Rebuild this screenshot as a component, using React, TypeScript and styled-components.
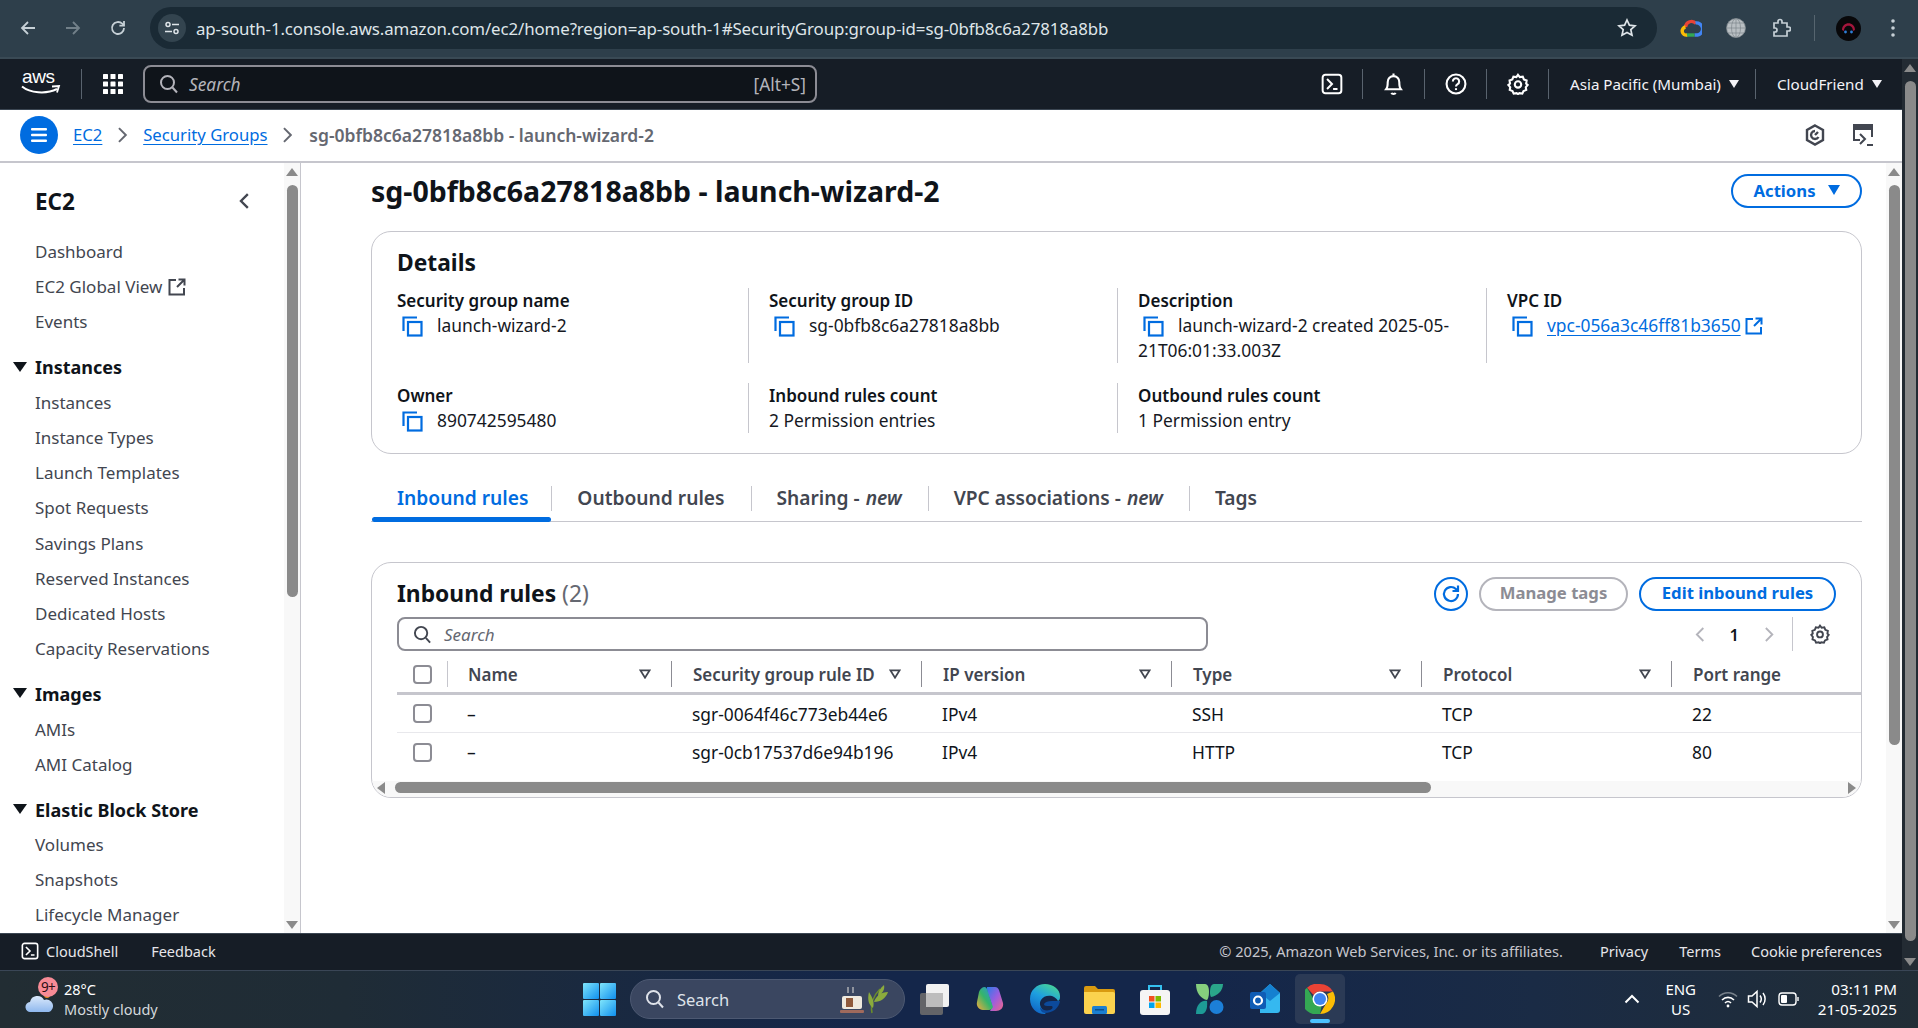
import React from 'react'
import styled, { createGlobalStyle } from 'styled-components'

const FONT = '"Noto Sans", "Open Sans", sans-serif'
const BLUE = '#006ce0'

const GlobalStyle = createGlobalStyle`
  html, body {
    margin: 0;
    padding: 0;
    height: 100%;
    overflow: hidden;
    background: #fff;
    font-family: ${FONT};
  }
  * { box-sizing: border-box; }
`

const Page = styled.div`
  width: 1918px;
  height: 1028px;
  display: flex;
  flex-direction: column;
  overflow: hidden;
`

/* browser chrome */
const BrowserBar = styled.div`
  height: 59px;
  flex: none;
  display: flex;
  align-items: center;
  background: #2e3f4b;
  border-bottom: 2px solid #3a4a55;
  padding: 0 0 1px 0;
  color: #c6d0d6;
`
const NavIcon = styled.div<{ $dim?: boolean; $w?: number; $ml?: number }>`
  width: ${p => p.$w ?? 45}px;
  margin-left: ${p => p.$ml ?? 0}px;
  display: flex;
  justify-content: center;
  opacity: ${p => (p.$dim ? 0.45 : 1)};
`
const UrlPill = styled.div`
  width: 1507px;
  height: 42px;
  margin-left: 10px;
  border-radius: 21px;
  background: #1a2a35;
  display: flex;
  align-items: center;
  padding: 0 20px 0 8px;
  color: #dfe5e9;
  font-size: 16.85px;
`
const SiteChip = styled.div`
  width: 28px;
  height: 28px;
  border-radius: 50%;
  background: #33444f;
  display: flex;
  align-items: center;
  justify-content: center;
  margin-right: 10px;
`
const UrlText = styled.span`
  flex: 1;
  letter-spacing: -0.1px;
`
const BrowserActions = styled.div`
  flex: 1;
  display: flex;
  align-items: center;
  padding-left: 11px;
`
const ThinDivider = styled.div`
  width: 1px;
  height: 26px;
  background: #56656f;
  margin: 0 8px 0 11px;
`

/* console */
const ConsoleWrap = styled.div`
  flex: 1;
  min-height: 0;
  display: flex;
`
const ConsoleColumn = styled.div`
  flex: 1;
  min-width: 0;
  display: flex;
  flex-direction: column;
`
const TopNav = styled.div`
  height: 51px;
  flex: none;
  background: #161d26;
  display: flex;
  align-items: center;
  color: #fff;
  border-bottom: 1px solid #3b4652;
`
const AwsLogo = styled.div`
  width: 81px;
  height: 100%;
  padding-left: 21px;
  display: flex;
  flex-direction: column;
  justify-content: center;
`
const AwsWord = styled.span`
  font-size: 19px;
  line-height: 15px;
  font-weight: 500;
  letter-spacing: -0.4px;
  font-family: "Liberation Sans", sans-serif;
  margin-left: 1px;
  margin-top: -4px;
`
const NavSep = styled.div`
  width: 1px;
  height: 30px;
  background: #59636e;
  flex: none;
`
const GridButton = styled.div`
  width: 61px;
  display: flex;
  justify-content: center;
`
const NavSearch = styled.div`
  width: 674px;
  height: 38px;
  background: #0f141a;
  border: 2px solid #8c8c94;
  border-radius: 8px;
  display: flex;
  align-items: center;
  padding: 0 9px 0 14px;
  color: #b4b4bb;
  font-size: 17.3px;
  gap: 10px;
`
const Placeholder = styled.span`
  font-style: italic;
  flex: 1;
`
const PlainPlaceholder = styled.span`
  flex: 1;
`
const NavRight = styled.div`
  margin-left: auto;
  display: flex;
  align-items: center;
  height: 100%;
`
const NavIconButton = styled.div`
  width: 61px;
  display: flex;
  justify-content: center;
  color: #fff;
`
const NavMenu = styled.div<{ $w: number }>`
  width: ${p => p.$w}px;
  padding-left: 21px;
  display: flex;
  align-items: center;
  font-size: 15.2px;
  color: #f3f3f7;
  white-space: nowrap;
`
const SmallCaret = styled.span`
  width: 0;
  height: 0;
  border-left: 5.5px solid transparent;
  border-right: 5.5px solid transparent;
  border-top: 8px solid #f3f3f7;
  margin-left: 8px;
`

const Breadcrumbs = styled.div`
  height: 53px;
  flex: none;
  background: #fff;
  border-bottom: 2px solid #c6c6cd;
  display: flex;
  align-items: center;
  padding: 0 28px 2px 20px;
  font-size: 16.7px;
`
const MenuCircle = styled.div`
  width: 38px;
  height: 38px;
  border-radius: 50%;
  background: ${BLUE};
  display: flex;
  align-items: center;
  justify-content: center;
  margin-right: 15px;
`
const Crumb = styled.a`
  color: ${BLUE};
  text-decoration: underline;
  text-underline-offset: 3px;
`
const CrumbCurrent = styled.span`
  color: #656871;
  font-weight: 600;
  font-size: 17.5px;
`
const CrumbChevron = styled.span<{ $mx: number }>`
  display: flex;
  margin: 0 ${p => p.$mx}px;
`
const CurrentChevron = styled(CrumbChevron)`
  margin-right: 17px;
`
const BreadcrumbTools = styled.div`
  margin-left: auto;
  display: flex;
  gap: 27px;
  align-items: center;
`

const ConsoleBody = styled.div`
  flex: 1;
  min-height: 0;
  display: flex;
`

const Sidebar = styled.aside`
  width: 301px;
  flex: none;
  display: flex;
  border-right: 1px solid #c6c6cd;
`
const SideInner = styled.nav`
  flex: 1;
  min-width: 0;
  overflow: hidden;
  padding: 20px 0 0 35px;
  color: #424650;
`
const SideTitleRow = styled.div`
  display: flex;
  align-items: center;
  justify-content: space-between;
  padding-right: 34px;
  height: 36px;
  margin-bottom: 15px;
`
const SideTitle = styled.div`
  font-size: 22.5px;
  font-weight: 700;
  color: #0f141a;
`
const SideItem = styled.div`
  height: 35.2px;
  display: flex;
  align-items: center;
  gap: 6px;
  font-size: 17px;
  white-space: nowrap;
`
const SideSection = styled.div`
  position: relative;
  height: 35px;
  margin-top: 10.2px;
  display: flex;
  align-items: center;
  font-size: 18px;
  font-weight: 700;
  color: #0f141a;
  white-space: nowrap;
`
const SectionCaret = styled.span`
  position: absolute;
  left: -22px;
  top: 12px;
  width: 0;
  height: 0;
  border-left: 7px solid transparent;
  border-right: 7px solid transparent;
  border-top: 10px solid #0f141a;
`

const Scrollbar = styled.div<{ $dark?: boolean; $w: number }>`
  width: ${p => p.$w}px;
  flex: none;
  display: flex;
  flex-direction: column;
  align-items: center;
  background: ${p => (p.$dark ? '#232b33' : '#f8f8f8')};
  padding: 5px 0 4px;
`
const ArrowUp = styled.span`
  width: 0;
  height: 0;
  flex: none;
  border-left: 6px solid transparent;
  border-right: 6px solid transparent;
  border-bottom: 8px solid #8a8a8a;
`
const ArrowDown = styled(ArrowUp)`
  border-bottom: 0;
  border-top: 8px solid #8a8a8a;
`
const ScrollTrack = styled.div`
  flex: 1;
  width: 100%;
  margin: 9px 0 5px;
  display: flex;
  justify-content: center;
`
const ScrollThumb = styled.div<{ $h: number }>`
  width: 11px;
  height: ${p => p.$h}px;
  background: #8a8a8a;
  border-radius: 6px;
`

const MainArea = styled.main`
  flex: 1;
  min-width: 0;
  display: flex;
`
const Content = styled.div`
  flex: 1;
  min-width: 0;
  padding: 0 24px 0 70px;
  overflow: hidden;
`
const TitleRow = styled.div`
  height: 68px;
  display: flex;
  align-items: center;
  justify-content: space-between;
  padding-bottom: 12px;
`
const PageTitle = styled.h1`
  margin: 0;
  font-size: 28.5px;
  font-weight: 700;
  color: #0f141a;
`
const Pill = styled.button<{ $muted?: boolean; $w: number }>`
  width: ${p => p.$w}px;
  height: 34px;
  border-radius: 17px;
  background: #fff;
  border: 2px solid ${p => (p.$muted ? '#b4b4bb' : BLUE)};
  color: ${p => (p.$muted ? '#8c8c94' : BLUE)};
  font-family: ${FONT};
  font-size: 16.7px;
  font-weight: 700;
  display: flex;
  align-items: center;
  justify-content: center;
  gap: 12px;
  padding: 0 0 2px;
`
const BlueCaret = styled.span`
  width: 0;
  height: 0;
  border-left: 6.5px solid transparent;
  border-right: 6.5px solid transparent;
  border-top: 10px solid ${BLUE};
`

const Card = styled.section`
  border: 1px solid #c6c6cd;
  border-radius: 20px;
  background: #fff;
`
const DetailsCard = styled(Card)`
  height: 223px;
  padding: 16px 25px 0;
`
const CardTitle = styled.h2`
  margin: 0;
  font-size: 22.8px;
  line-height: 30px;
  font-weight: 700;
  color: #0f141a;
`
const DetailGrid = styled.div`
  margin-top: 10px;
  display: grid;
  grid-template-columns: 351px 369px 369px 1fr;
  grid-template-rows: 75px 50px;
  row-gap: 20px;
`
const DetailCell = styled.div<{ $first?: boolean }>`
  padding-left: ${p => (p.$first ? 0 : 20)}px;
  border-left: ${p => (p.$first ? 0 : '1px solid #c6c6cd')};
  color: #0f141a;
`
const DetailLabel = styled.div`
  font-size: 17px;
  font-weight: 600;
  line-height: 25px;
`
const DetailValue = styled.div`
  font-size: 17.4px;
  line-height: 25px;
  color: #16191f;
`
const CopyWrap = styled.span`
  display: inline-block;
  margin: 0 14px 0 5px;
  vertical-align: -5px;
  line-height: 0;
`
const ExtLink = styled.a`
  color: ${BLUE};
  text-decoration: underline;
  text-underline-offset: 3px;
`
const ExtWrap = styled.span`
  display: inline-block;
  line-height: 0;
  vertical-align: -3px;
`

const TabList = styled.div`
  margin-top: 27px;
  height: 41px;
  display: flex;
  border-bottom: 1px solid #c6c6cd;
`
const Tab = styled.div<{ $active?: boolean; $first?: boolean }>`
  position: relative;
  height: 40px;
  display: flex;
  align-items: center;
  padding: 0 ${p => (p.$first ? 23 : 26)}px 8px 26px;
  font-size: 19.2px;
  font-weight: 600;
  color: ${p => (p.$active ? BLUE : '#424650')};
  white-space: nowrap;
  em { font-weight: 600; margin-left: 6px; }
  &::before {
    content: '';
    display: ${p => (p.$first ? 'none' : 'block')};
    position: absolute;
    left: 0;
    top: 5px;
    height: 25px;
    width: 1px;
    background: #c6c6cd;
  }
  &::after {
    content: '';
    display: ${p => (p.$active ? 'block' : 'none')};
    position: absolute;
    left: 1px;
    right: 0;
    bottom: -1px;
    height: 5px;
    border-radius: 3px;
    background: ${BLUE};
  }
`

const RulesCard = styled(Card)`
  margin-top: 40px;
  height: 236px;
  overflow: hidden;
  display: flex;
  flex-direction: column;
`
const RulesHeader = styled.div`
  padding: 12px 25px 0;
  display: flex;
  align-items: center;
  justify-content: space-between;
  height: 49px;
  flex: none;
`
const RulesTitle = styled(CardTitle)`
  span { font-weight: 400; color: #656871; }
`
const RulesActions = styled.div`
  display: flex;
  align-items: center;
  gap: 11px;
`
const RefreshButton = styled.div`
  width: 34px;
  height: 34px;
  border: 2px solid ${BLUE};
  border-radius: 50%;
  display: flex;
  align-items: center;
  justify-content: center;
`
const FilterRow = styled.div`
  height: 34px;
  flex: none;
  margin-top: 5px;
  padding: 0 25px;
  display: flex;
  justify-content: space-between;
  align-items: center;
`
const RulesSearch = styled.div`
  width: 811px;
  height: 34px;
  border: 2px solid #8c8c94;
  border-radius: 8px;
  display: flex;
  align-items: center;
  gap: 12px;
  padding-left: 14px;
  font-size: 17px;
  color: #656871;
`
const Pager = styled.div`
  display: flex;
  align-items: center;
  height: 100%;
  padding-right: 6px;
  font-size: 16.5px;
  font-weight: 600;
  color: #0f141a;
`
const PagerNum = styled.span`
  width: 59px;
  text-align: center;
`
const PagerGear = styled.div`
  margin-left: 18px;
  padding-left: 17px;
  height: 34px;
  display: flex;
  align-items: center;
  border-left: 1px solid #c6c6cd;
`
const RuleGrid = styled.div<{ $head?: boolean }>`
  display: grid;
  grid-template-columns: 70px 204px repeat(4, 250px) 1fr;
  margin-left: 25px;
  flex: none;
  align-items: center;
  height: ${p => (p.$head ? 39 : 38)}px;
  border-bottom: ${p => (p.$head ? '3px solid #c6c6cd' : '1px solid #e8e8ec')};
  font-size: 17.4px;
  color: #0f141a;
`
const LastRuleGrid = styled(RuleGrid)`
  border-bottom: 0;
`
const HeadRow = styled(RuleGrid)`
  margin-top: 5px;
  font-size: 17px;
  font-weight: 600;
  color: #424650;
`
const CheckBox = styled.div`
  width: 19px;
  height: 19px;
  margin-left: 16px;
  border: 2px solid #8c8c94;
  border-radius: 4px;
  background: #fff;
`
const HeadCell = styled.div`
  height: 26px;
  display: flex;
  align-items: center;
  justify-content: space-between;
  padding: 0 20px 0 21px;
  border-left: 1.5px solid #8c8c94;
  white-space: nowrap;
`
const NameHead = styled(HeadCell)`
  margin-left: -20px;
  padding-left: 20px;
  border-left: 1px solid #c6c6cd;
`
const BodyCell = styled.div`
  padding-left: 21px;
  white-space: nowrap;
`
const NameCell = styled(BodyCell)`
  padding-left: 0;
`
const HScroll = styled.div`
  margin-top: auto;
  height: 16px;
  flex: none;
  background: #f8f8f8;
  display: flex;
  align-items: center;
  padding: 0 5px 3px 5px;
`
const ArrowLeft = styled.span`
  width: 0;
  height: 0;
  flex: none;
  border-top: 6px solid transparent;
  border-bottom: 6px solid transparent;
  border-right: 8px solid #8a8a8a;
`
const ArrowRight = styled.span`
  width: 0;
  height: 0;
  flex: none;
  margin-left: auto;
  border-top: 6px solid transparent;
  border-bottom: 6px solid transparent;
  border-left: 8px solid #8a8a8a;
`
const HThumb = styled.div`
  width: 1036px;
  height: 11px;
  margin-left: 10px;
  background: #8a8a8a;
  border-radius: 6px;
`

const Footer = styled.footer`
  height: 37px;
  flex: none;
  background: #161d26;
  display: flex;
  align-items: center;
  padding: 0 20px 2px 21px;
  color: #e6e6ea;
  font-size: 14.5px;
  border-top: 1px solid #3b4652;
`
const FooterCopy = styled.span`
  margin-left: auto;
  color: #c6c6cd;
  font-size: 14.6px;
`
const FooterLink = styled.span<{ $ml: number }>`
  margin-left: ${p => p.$ml}px;
`

/* windows taskbar */
const Taskbar = styled.div`
  height: 58px;
  flex: none;
  display: flex;
  align-items: center;
  padding-bottom: 1px;
  background: linear-gradient(90deg, #222d33 0%, #1f2c36 18%, #14264a 45%, #14264a 62%, #1a2b45 80%, #212d36 100%);
  border-top: 1px solid #3a4656;
  color: #fff;
`
const Weather = styled.div`
  width: 583px;
  flex: none;
  display: flex;
  padding-left: 25px;
  position: relative;
`
const CloudSlot = styled.div`
  align-self: flex-end;
  line-height: 0;
  margin-bottom: 7px;
`
const WeatherText = styled.div`
  margin-left: 9px;
  font-size: 14.5px;
  line-height: 20px;
  span { display: block; color: #d4d8dc; }
`
const Badge = styled.div`
  position: absolute;
  left: 38px;
  top: -2px;
  width: 20px;
  height: 20px;
  border-radius: 50%;
  background: #f78b96;
  color: #2a1015;
  font-size: 13.5px;
  line-height: 20px;
  text-align: center;
  letter-spacing: -0.6px;
`
const TaskSearch = styled.div`
  width: 275px;
  height: 40px;
  margin-left: 14px;
  border-radius: 20px;
  background: #3a4660;
  border: 1px solid #4d5972;
  display: flex;
  align-items: center;
  padding: 0 8px 0 14px;
  gap: 12px;
  font-size: 16.5px;
  color: #dfe3ea;
`
const TaskIcons = styled.div`
  display: flex;
  align-items: center;
  margin-left: 2px;
`
const TaskIcon = styled.div<{ $active?: boolean }>`
  width: ${p => (p.$active ? 50 : 55)}px;
  margin: 0 ${p => (p.$active ? 2.5 : 0)}px;
  height: 50px;
  display: flex;
  align-items: center;
  justify-content: center;
  position: relative;
  border-radius: 5px;
  background: ${p => (p.$active ? '#2b3a55' : 'transparent')};
  &::after {
    content: '';
    display: ${p => (p.$active ? 'block' : 'none')};
    position: absolute;
    bottom: 1px;
    left: 15px;
    width: 20px;
    height: 4px;
    border-radius: 2px;
    background: #4cc2ff;
  }
`
const Tray = styled.div`
  margin-left: auto;
  display: flex;
  align-items: center;
  padding-right: 21px;
`
const LangBlock = styled.div`
  width: 40px;
  margin-left: 21px;
  text-align: center;
  font-size: 15px;
  line-height: 20px;
`
const TrayIcons = styled.div`
  display: flex;
  align-items: center;
  gap: 9.5px;
  margin-left: 17px;
`
const ClockBlock = styled.div`
  margin-left: 19px;
  text-align: right;
  font-size: 15.2px;
  line-height: 20px;
`

/* icons */
const BackArrow = ({ flip }: { flip?: boolean }) => (
  <svg width="18" height="18" viewBox="0 0 18 18" fill="none" stroke="#c6d0d6" strokeWidth="1.8" style={flip ? { transform: 'scaleX(-1)' } : undefined}>
    <path d="M16 9H3M9 3L3 9l6 6" />
  </svg>
)
const ReloadIcon = () => (
  <svg width="18" height="18" viewBox="0 0 18 18" fill="none" stroke="#c6d0d6" strokeWidth="1.8">
    <path d="M15 9a6 6 0 1 1-1.8-4.3L15 6.5" />
    <path d="M15 2v4.6h-4.6" />
  </svg>
)
const TuneIcon = () => (
  <svg width="16" height="16" viewBox="0 0 16 16" fill="none" stroke="#dfe5e9" strokeWidth="1.5">
    <circle cx="4" cy="4.5" r="2" />
    <path d="M8 4.5h7M1 11.5h7" />
    <circle cx="12" cy="11.5" r="2" />
  </svg>
)
const StarIcon = () => (
  <svg width="20" height="20" viewBox="0 0 20 20" fill="none" stroke="#dfe5e9" strokeWidth="1.7">
    <path d="M10 2l2.4 5.2 5.6.6-4.2 3.8 1.2 5.6L10 14.4l-5 2.8 1.2-5.6L2 7.8l5.6-.6z" />
  </svg>
)
const GoogleCloud = () => (
  <svg width="22" height="20" viewBox="0 0 22 20" fill="none" strokeWidth="3.4">
    <path d="M5.5 9a6 6 0 0 1 10.5-3.5" stroke="#ea4335" />
    <path d="M15.5 5a5.5 5.5 0 0 1 2 12h-3" stroke="#4285f4" />
    <path d="M14.5 17H6" stroke="#34a853" />
    <path d="M7 17a4 4 0 0 1-1.5-8" stroke="#fbbc05" />
  </svg>
)
const GlobeIcon = () => (
  <svg width="20" height="20" viewBox="0 0 20 20" fill="#b9bfc3" stroke="#7e868c" strokeWidth="0.7">
    <circle cx="10" cy="10" r="9.5" />
    <ellipse cx="10" cy="10" rx="4.5" ry="9.5" fill="none" />
    <path d="M10 0v20M0.5 10h19M2 5h16M2 15h16" fill="none" />
  </svg>
)
const PuzzleIcon = () => (
  <svg width="20" height="20" viewBox="0 0 20 20" fill="none" stroke="#c6d0d6" strokeWidth="1.7">
    <path d="M3 5h4V3.5a2 2 0 0 1 4 0V5h5v4h1.5a2 2 0 0 1 0 4H16v5H3v-4h1a2 2 0 0 0 0-4H3z" />
  </svg>
)
const Avatar = () => (
  <svg width="25" height="25" viewBox="0 0 25 25">
    <circle cx="12.5" cy="12.5" r="12.5" fill="#08080a" />
    <path d="M6 14C6 5 19 5 19 14l-2 1C17 8 8 8 8 15z" fill="#a3163c" />
    <circle cx="9.5" cy="16" r="1.4" fill="#2f7fd8" />
    <circle cx="15.5" cy="16" r="1.4" fill="#2f7fd8" />
  </svg>
)
const Kebab = () => (
  <svg width="4" height="18" viewBox="0 0 4 18" fill="#c6d0d6">
    <circle cx="2" cy="2" r="1.8" />
    <circle cx="2" cy="9" r="1.8" />
    <circle cx="2" cy="16" r="1.8" />
  </svg>
)
const AwsSmile = () => (
  <svg width="40" height="10" viewBox="0 0 40 10" fill="none" style={{ display: 'block', marginTop: 1 }}>
    <path d="M1 1.5C9 8 25 9.5 36 4" stroke="#fff" strokeWidth="2" />
    <path d="M31 1.5l7-.5-2 6.5" stroke="#fff" strokeWidth="1.8" />
  </svg>
)
const GridIcon = () => (
  <svg width="20" height="20" viewBox="0 0 20 20" fill="#fff">
    {[0, 7.5, 15].flatMap(y => [0, 7.5, 15].map(x => <rect key={`${x}-${y}`} x={x} y={y} width="5" height="5" rx="0.6" />))}
  </svg>
)
const SearchGlyph = ({ c = '#b4b4bb', s = 20 }: { c?: string; s?: number }) => (
  <svg width={s} height={s} viewBox="0 0 20 20" fill="none" stroke={c} strokeWidth="2">
    <circle cx="8.5" cy="8.5" r="6.5" />
    <path d="M13.5 13.5L18 18.5" />
  </svg>
)
const TerminalIcon = ({ s = 20 }: { s?: number }) => (
  <svg width={s} height={s} viewBox="0 0 20 20" fill="none" stroke="#fff" strokeWidth="1.8">
    <rect x="1.5" y="1.5" width="17" height="17" rx="2.5" />
    <path d="M5.5 5.5L10 10l-4.5 4.5M11 14.5h4" />
  </svg>
)
const BellIcon = () => (
  <svg width="21" height="24" viewBox="0 0 20 22" fill="none" stroke="#fff" strokeWidth="2">
    <path d="M3 16c1.5-2 1.5-4 1.5-7a5.5 5.5 0 0 1 11 0c0 3 0 5 1.5 7z" />
    <path d="M8 19.5c.5 1.3 3.5 1.3 4 0" />
    <path d="M10 1v2" />
  </svg>
)
const HelpIcon = () => (
  <svg width="22" height="22" viewBox="0 0 21 21" fill="none" stroke="#fff" strokeWidth="2">
    <circle cx="10.5" cy="10.5" r="9" />
    <path d="M7.5 8a3 3 0 1 1 4.5 2.6c-1 .6-1.5 1.1-1.5 2.4" />
    <path d="M10.5 14.5v1.8" />
  </svg>
)
const GearIcon = ({ c = '#fff', s = 22 }: { c?: string; s?: number }) => (
  <svg width={s} height={s} viewBox="0 0 24 24" fill="none" stroke={c} strokeWidth="2.3">
    <path d="M12 2l2 2.5 3.2-.5 1.2 3 3 1.2-.5 3.3L22.5 13l-2 2.5.5 3-3 1.2-1.3 2.8-3.2-.5L12 23l-1.5-1-3.2.5L6 19.7l-3-1.2.5-3L1.5 13l1.8-1.5L2.8 8.2l3-1.2L7 4l3.2.5z" />
    <circle cx="12" cy="12.5" r="3.5" />
  </svg>
)
const MenuLines = () => (
  <svg width="18" height="16" viewBox="0 0 18 16" fill="#fff">
    <rect x="1" y="1" width="16" height="2.6" rx="1" />
    <rect x="1" y="6.7" width="16" height="2.6" rx="1" />
    <rect x="1" y="12.4" width="16" height="2.6" rx="1" />
  </svg>
)
const ChevronRight = ({ c = '#656871', s = 18, w = 2 }: { c?: string; s?: number; w?: number }) => (
  <svg width={s * 0.6} height={s} viewBox="0 0 11 18" fill="none" stroke={c} strokeWidth={w}>
    <path d="M2 2l7 7-7 7" />
  </svg>
)
const ChevronLeft = ({ c = '#424650', s = 18, w = 2.4 }: { c?: string; s?: number; w?: number }) => (
  <svg width={s * 0.6} height={s} viewBox="0 0 11 18" fill="none" stroke={c} strokeWidth={w}>
    <path d="M9 2L2 9l7 7" />
  </svg>
)
const HexIcon = () => (
  <svg width="20" height="22" viewBox="0 0 20 22" fill="none" stroke="#424650" strokeWidth="2.4">
    <path d="M10 1.5l8 4.5v10l-8 4.5L2 16V6z" />
    <path d="M10 7a4 4 0 1 0 3.5 6M10 11l3-3" />
  </svg>
)
const PanelIcon = () => (
  <svg width="22" height="24" viewBox="0 0 22 24" fill="none" stroke="#424650" strokeWidth="2">
    <path d="M8 17H2V2h18v12" />
    <path d="M2 5h18" strokeWidth="4" />
    <path d="M8 11l5 5-5 5M15 22h6" />
  </svg>
)
const ExternalIcon = ({ c = '#424650' }: { c?: string }) => (
  <svg width="18" height="18" viewBox="0 0 18 18" fill="none" stroke={c} strokeWidth="2">
    <path d="M8 2H1.5v14.5H16V10" />
    <path d="M9 9l7-7M10.5 1.5h6v6" />
  </svg>
)
const CopyIcon = () => (
  <svg width="21" height="21" viewBox="0 0 21 21" fill="none" stroke={BLUE} strokeWidth="2.2">
    <path d="M1.5 15V1.5H15" />
    <rect x="6" y="6" width="13.5" height="13.5" />
  </svg>
)
const RefreshGlyph = () => (
  <svg width="20" height="20" viewBox="0 0 20 20" fill="none" stroke={BLUE} strokeWidth="2.2">
    <path d="M17 10a7 7 0 1 1-2.1-5L17 7" />
    <path d="M17 1.5V7h-5.5" />
  </svg>
)
const SortMark = () => (
  <svg width="12" height="10" viewBox="0 0 13 11" fill="none" stroke="#424650" strokeWidth="2" style={{ flex: 'none' }}>
    <path d="M1.5 1.5h10L6.5 9.5z" />
  </svg>
)
const StartLogo = () => (
  <svg width="33" height="33" viewBox="0 0 33 33">
    <defs>
      <linearGradient id="win" x1="0" y1="0" x2="1" y2="1">
        <stop offset="0" stopColor="#7fe5fb" />
        <stop offset="1" stopColor="#0f8fee" />
      </linearGradient>
    </defs>
    <rect x="0" y="0" width="16" height="16" fill="url(#win)" rx="1" />
    <rect x="17" y="0" width="16" height="16" fill="url(#win)" rx="1" />
    <rect x="0" y="17" width="16" height="16" fill="url(#win)" rx="1" />
    <rect x="17" y="17" width="16" height="16" fill="url(#win)" rx="1" />
  </svg>
)
const TeaLeaf = () => (
  <svg width="56" height="30" viewBox="0 0 56 30" fill="none">
    <rect x="2" y="12" width="20" height="13" rx="2" fill="#efeadf" />
    <rect x="6" y="14" width="7" height="9" fill="#8f5a3c" />
    <rect x="0" y="26" width="24" height="3" rx="1" fill="#a06a5c" />
    <path d="M8 9V3M13 9V3" stroke="#c8c8c8" strokeWidth="1.2" />
    <path d="M32 29c-2-9 2-18 8-24" stroke="#6b8e2a" strokeWidth="1.5" />
    <path d="M34 18c2-6 7-10 14-10-2 6-7 10-14 10zM33 24c-4-3-6-8-4-16 3 5 6 10 4 16zM38 12c0-4 2-8 6-11 1 4-1 8-6 11z" fill="#8bab3d" />
  </svg>
)
const TaskViewIcon = () => (
  <svg width="34" height="34" viewBox="0 0 34 34">
    <rect x="8" y="2" width="23" height="23" rx="2" fill="#f1f1f1" />
    <rect x="2" y="11" width="23" height="22" rx="2" fill="#6b6b6b" fillOpacity="0.9" />
    <rect x="8" y="11" width="17" height="14" fill="#bdbdbd" />
  </svg>
)
const CopilotIcon = () => (
  <svg width="30" height="30" viewBox="0 0 30 30">
    <defs>
      <linearGradient id="cpa" x1="0" y1="0" x2="1" y2="1">
        <stop offset="0" stopColor="#2a7ce8" />
        <stop offset="0.5" stopColor="#9a5de0" />
        <stop offset="1" stopColor="#f0668a" />
      </linearGradient>
      <linearGradient id="cpb" x1="0" y1="1" x2="1" y2="0">
        <stop offset="0" stopColor="#f7a93a" />
        <stop offset="0.5" stopColor="#35b56a" />
        <stop offset="1" stopColor="#2a8de8" />
      </linearGradient>
    </defs>
    <path d="M12 3h8c2 0 3 1 4 3l4 13c1 5-3 8-7 8h-6c2-3 2-5 1-9l-3-8C12 7 12 5 12 3z" fill="url(#cpa)" />
    <path d="M10 3c-3 0-5 2-6 5l-2 10c-1 4 2 8 6 8h6c2 0 3-1 4-3L13 8c-1-3-1-4-3-5z" fill="url(#cpb)" />
  </svg>
)
const EdgeIcon = () => (
  <svg width="30" height="30" viewBox="0 0 30 30">
    <defs>
      <linearGradient id="edg" x1="0.7" y1="0" x2="0.2" y2="1">
        <stop offset="0" stopColor="#45d29a" />
        <stop offset="0.45" stopColor="#1e9fe0" />
        <stop offset="1" stopColor="#0f63c4" />
      </linearGradient>
    </defs>
    <path d="M15 0C7 0 0 6 0 15c0 9 7 15 14 15 3 0 1-2-1-4-3-3-4-7-2-10 2-4 7-5 11-4 3 1 5 3 6 5 2-1 2-3 2-5C30 5 23 0 15 0z" fill="url(#edg)" />
    <path d="M30 17c-1 7-7 12-15 12-3 0-5-3-5-6 2 3 6 4 10 3 3-1 3-3 2-4h-5c-2 0-3-1-3-2 1-2 4-3 8-3s6 0 8 0z" fill="#0c4a9c" />
  </svg>
)
const FolderIcon = () => (
  <svg width="31" height="29" viewBox="0 0 31 29">
    <path d="M0 3a2 2 0 0 1 2-2h9l3 3h15a2 2 0 0 1 2 2v4H0z" fill="#d99a10" />
    <path d="M0 7h29a2 2 0 0 1 2 2v18a2 2 0 0 1-2 2H2a2 2 0 0 1-2-2z" fill="#fbd24e" />
    <rect x="8" y="21" width="15" height="8" rx="1.5" fill="#1b7fd1" />
    <rect x="11" y="24" width="9" height="1.5" fill="#0c4f8c" />
  </svg>
)
const StoreIcon = () => (
  <svg width="30" height="31" viewBox="0 0 30 31">
    <path d="M9 7V2h12v5" fill="none" stroke="#35c0f0" strokeWidth="2" />
    <rect x="0" y="6" width="30" height="25" rx="3" fill="#f5f5f5" />
    <rect x="9" y="12" width="5.5" height="5.5" fill="#f25022" />
    <rect x="15.5" y="12" width="5.5" height="5.5" fill="#7fba00" />
    <rect x="9" y="18.5" width="5.5" height="5.5" fill="#00a4ef" />
    <rect x="15.5" y="18.5" width="5.5" height="5.5" fill="#ffb900" />
  </svg>
)
const GreenAppIcon = () => (
  <svg width="29" height="30" viewBox="0 0 29 30">
    <path d="M1 0h9c3 0 4 4 4 8 0 4-1 7-2 8C6 15 1 9 1 0z" fill="#86cf7d" />
    <path d="M28 0h-9c-3 0-4 4-4 8 0 2 0 3 1 5 6-1 12-6 12-13z" fill="#2aa68a" />
    <path d="M1 30h6c3 0 6-5 5-13C7 16 1 20 1 30z" fill="#1d9a96" />
    <circle cx="21.5" cy="23" r="7" fill="#1c7fd8" />
  </svg>
)
const OutlookIcon = () => (
  <svg width="30" height="30" viewBox="0 0 30 30">
    <path d="M10 9l10-9 10 9v17a3 3 0 0 1-3 3H10z" fill="#35b8f0" />
    <path d="M20 0l10 9-10 8-10-8z" fill="#1580d0" />
    <rect x="0" y="8" width="16" height="17" rx="2" fill="#0f5cb5" />
    <circle cx="8" cy="16.5" r="4" fill="none" stroke="#fff" strokeWidth="2.2" />
  </svg>
)
const ChromeIcon = () => (
  <svg width="30" height="30" viewBox="0 0 30 30">
    <path d="M15 0a15 15 0 0 1 13 7.5H15A7.5 7.5 0 0 0 8.5 11L2 3.8A15 15 0 0 1 15 0z" fill="#ea4335" />
    <path d="M28 7.5A15 15 0 0 1 15 30l6.5-11.2A7.5 7.5 0 0 0 22 10z" fill="#fbbc05" />
    <path d="M15 30A15 15 0 0 1 2 3.8l6.5 11.2a7.5 7.5 0 0 0 8 7.3z" fill="#34a853" />
    <circle cx="15" cy="15" r="7.5" fill="#fff" />
    <circle cx="15" cy="15" r="6" fill="#3f84f0" />
  </svg>
)
const CloudSun = () => (
  <svg width="30" height="20" viewBox="0 0 30 20">
    <defs>
      <linearGradient id="cld" x1="0" y1="0" x2="0" y2="1">
        <stop offset="0" stopColor="#dbe9fb" />
        <stop offset="1" stopColor="#8fb8ee" />
      </linearGradient>
    </defs>
    <circle cx="22" cy="3" r="3" fill="#e98a1e" />
    <path d="M6 20a5 5 0 0 1-1-10 7.5 7.5 0 0 1 14-2 6 6 0 0 1 5 12z" fill="url(#cld)" />
  </svg>
)
const CaretUpSmall = () => (
  <svg width="16" height="10" viewBox="0 0 16 10" fill="none" stroke="#fff" strokeWidth="2">
    <path d="M1.5 8.5L8 2l6.5 6.5" />
  </svg>
)
const WifiIcon = () => (
  <svg width="20" height="18" viewBox="0 0 20 18" fill="none" strokeWidth="1.6">
    <path d="M1 6.5c5-5 13-5 18 0" stroke="#77808a" />
    <path d="M4 10c3.5-3.5 8.5-3.5 12 0" stroke="#fff" />
    <path d="M7 13c1.8-1.8 4.2-1.8 6 0" stroke="#fff" />
    <circle cx="10" cy="16" r="1.4" fill="#fff" />
  </svg>
)
const VolumeIcon = () => (
  <svg width="21" height="20" viewBox="0 0 21 20" fill="none" stroke="#fff" strokeWidth="1.5">
    <path d="M1.5 7v6h3.5l5 4.5v-15L5 7z" />
    <path d="M13 6.5c1.5 2 1.5 5 0 7M16 4c2.8 3.5 2.8 8.5 0 12" />
  </svg>
)
const BatteryIcon = () => (
  <svg width="21" height="14" viewBox="0 0 21 14" fill="none" stroke="#fff" strokeWidth="1.4">
    <rect x="1" y="1" width="17" height="12" rx="3" />
    <rect x="3" y="3" width="6" height="8" rx="1" fill="#fff" stroke="none" />
    <path d="M20 5v4" />
  </svg>
)

const SIDE_GROUPS = [
  { title: 'Instances', items: ['Instances', 'Instance Types', 'Launch Templates', 'Spot Requests', 'Savings Plans', 'Reserved Instances', 'Dedicated Hosts', 'Capacity Reservations'] },
  { title: 'Images', items: ['AMIs', 'AMI Catalog'] },
  { title: 'Elastic Block Store', items: ['Volumes', 'Snapshots', 'Lifecycle Manager'] },
]

const RULES = [
  { id: 'sgr-0064f46c773eb44e6', type: 'SSH', port: '22' },
  { id: 'sgr-0cb17537d6e94b196', type: 'HTTP', port: '80' },
]

const RuleRow: React.FC<{ rule: typeof RULES[number]; last?: boolean }> = ({ rule, last }) => {
  const Row = last ? LastRuleGrid : RuleGrid
  return (
    <Row>
      <CheckBox />
      <NameCell>–</NameCell>
      <BodyCell>{rule.id}</BodyCell>
      <BodyCell>IPv4</BodyCell>
      <BodyCell>{rule.type}</BodyCell>
      <BodyCell>TCP</BodyCell>
      <BodyCell>{rule.port}</BodyCell>
    </Row>
  )
}

const Detail: React.FC<{ label: string; first?: boolean; copy?: boolean; children: React.ReactNode }> = ({ label, first, copy, children }) => (
  <DetailCell $first={first}>
    <DetailLabel>{label}</DetailLabel>
    <DetailValue>
      {copy && <CopyWrap><CopyIcon /></CopyWrap>}
      {children}
    </DetailValue>
  </DetailCell>
)

const App: React.FC = () => (
  <Page>
    <GlobalStyle />
    <BrowserBar>
      <NavIcon $ml={5}><BackArrow /></NavIcon>
      <NavIcon $dim><BackArrow flip /></NavIcon>
      <NavIcon><ReloadIcon /></NavIcon>
      <UrlPill>
        <SiteChip><TuneIcon /></SiteChip>
        <UrlText>ap-south-1.console.aws.amazon.com/ec2/home?region=ap-south-1#SecurityGroup:group-id=sg-0bfb8c6a27818a8bb</UrlText>
        <StarIcon />
      </UrlPill>
      <BrowserActions>
        <NavIcon><GoogleCloud /></NavIcon>
        <NavIcon><GlobeIcon /></NavIcon>
        <NavIcon><PuzzleIcon /></NavIcon>
        <ThinDivider />
        <NavIcon $w={50}><Avatar /></NavIcon>
        <NavIcon $w={40}><Kebab /></NavIcon>
      </BrowserActions>
    </BrowserBar>
    <ConsoleWrap>
      <ConsoleColumn>
        <TopNav>
          <AwsLogo>
            <AwsWord>aws</AwsWord>
            <AwsSmile />
          </AwsLogo>
          <NavSep />
          <GridButton><GridIcon /></GridButton>
          <NavSearch>
            <SearchGlyph />
            <Placeholder>Search</Placeholder>
            <span>[Alt+S]</span>
          </NavSearch>
          <NavRight>
            <NavIconButton><TerminalIcon s={22} /></NavIconButton>
            <NavSep />
            <NavIconButton><BellIcon /></NavIconButton>
            <NavSep />
            <NavIconButton><HelpIcon /></NavIconButton>
            <NavSep />
            <NavIconButton><GearIcon /></NavIconButton>
            <NavSep />
            <NavMenu $w={206}>Asia Pacific (Mumbai)<SmallCaret /></NavMenu>
            <NavSep />
            <NavMenu $w={146}>CloudFriend<SmallCaret /></NavMenu>
          </NavRight>
        </TopNav>
        <Breadcrumbs>
          <MenuCircle><MenuLines /></MenuCircle>
          <Crumb>EC2</Crumb>
          <CrumbChevron $mx={15}><ChevronRight /></CrumbChevron>
          <Crumb>Security Groups</Crumb>
          <CurrentChevron $mx={14}><ChevronRight /></CurrentChevron>
          <CrumbCurrent>sg-0bfb8c6a27818a8bb - launch-wizard-2</CrumbCurrent>
          <BreadcrumbTools>
            <HexIcon />
            <PanelIcon />
          </BreadcrumbTools>
        </Breadcrumbs>
        <ConsoleBody>
          <Sidebar>
            <SideInner>
              <SideTitleRow>
                <SideTitle>EC2</SideTitle>
                <ChevronLeft />
              </SideTitleRow>
              <SideItem>Dashboard</SideItem>
              <SideItem>EC2 Global View <ExternalIcon /></SideItem>
              <SideItem>Events</SideItem>
              {SIDE_GROUPS.map(group => (
                <React.Fragment key={group.title}>
                  <SideSection><SectionCaret />{group.title}</SideSection>
                  {group.items.map(item => <SideItem key={item}>{item}</SideItem>)}
                </React.Fragment>
              ))}
            </SideInner>
            <Scrollbar $w={16}>
              <ArrowUp />
              <ScrollTrack><ScrollThumb $h={412} /></ScrollTrack>
              <ArrowDown />
            </Scrollbar>
          </Sidebar>
          <MainArea>
            <Content>
              <TitleRow>
                <PageTitle>sg-0bfb8c6a27818a8bb - launch-wizard-2</PageTitle>
                <Pill $w={131}>Actions <BlueCaret /></Pill>
              </TitleRow>
              <DetailsCard>
                <CardTitle>Details</CardTitle>
                <DetailGrid>
                  <Detail first copy label="Security group name">launch-wizard-2</Detail>
                  <Detail copy label="Security group ID">sg-0bfb8c6a27818a8bb</Detail>
                  <Detail copy label="Description">launch-wizard-2 created 2025-05-21T06:01:33.003Z</Detail>
                  <Detail copy label="VPC ID"><ExtLink>vpc-056a3c46ff81b3650</ExtLink> <ExtWrap><ExternalIcon c={BLUE} /></ExtWrap></Detail>
                  <Detail first copy label="Owner">890742595480</Detail>
                  <Detail label="Inbound rules count">2 Permission entries</Detail>
                  <Detail label="Outbound rules count">1 Permission entry</Detail>
                </DetailGrid>
              </DetailsCard>
              <TabList>
                <Tab $active $first>Inbound rules</Tab>
                <Tab>Outbound rules</Tab>
                <Tab>Sharing - <em><i>new</i></em></Tab>
                <Tab>VPC associations - <em><i>new</i></em></Tab>
                <Tab>Tags</Tab>
              </TabList>
              <RulesCard>
                <RulesHeader>
                  <RulesTitle>Inbound rules <span>(2)</span></RulesTitle>
                  <RulesActions>
                    <RefreshButton><RefreshGlyph /></RefreshButton>
                    <Pill $muted $w={149}>Manage tags</Pill>
                    <Pill $w={197}>Edit inbound rules</Pill>
                  </RulesActions>
                </RulesHeader>
                <FilterRow>
                  <RulesSearch>
                    <SearchGlyph c="#424650" s={19} />
                    <Placeholder>Search</Placeholder>
                  </RulesSearch>
                  <Pager>
                    <ChevronLeft c="#b4b4bb" w={2} s={17} />
                    <PagerNum>1</PagerNum>
                    <ChevronRight c="#b4b4bb" s={17} />
                    <PagerGear><GearIcon c="#424650" s={20} /></PagerGear>
                  </Pager>
                </FilterRow>
                <HeadRow $head>
                  <CheckBox />
                  <NameHead>Name<SortMark /></NameHead>
                  <HeadCell>Security group rule ID<SortMark /></HeadCell>
                  <HeadCell>IP version<SortMark /></HeadCell>
                  <HeadCell>Type<SortMark /></HeadCell>
                  <HeadCell>Protocol<SortMark /></HeadCell>
                  <HeadCell>Port range</HeadCell>
                </HeadRow>
                <RuleRow rule={RULES[0]} />
                <RuleRow rule={RULES[1]} last />
                <HScroll>
                  <ArrowLeft />
                  <HThumb />
                  <ArrowRight />
                </HScroll>
              </RulesCard>
            </Content>
            <Scrollbar $w={16}>
              <ArrowUp />
              <ScrollTrack><ScrollThumb $h={560} /></ScrollTrack>
              <ArrowDown />
            </Scrollbar>
          </MainArea>
        </ConsoleBody>
        <Footer>
          <TerminalIcon s={18} />
          <FooterLink $ml={7}>CloudShell</FooterLink>
          <FooterLink $ml={33}>Feedback</FooterLink>
          <FooterCopy>© 2025, Amazon Web Services, Inc. or its affiliates.</FooterCopy>
          <FooterLink $ml={37}>Privacy</FooterLink>
          <FooterLink $ml={31}>Terms</FooterLink>
          <FooterLink $ml={30}>Cookie preferences</FooterLink>
        </Footer>
      </ConsoleColumn>
      <Scrollbar $dark $w={16}>
        <ArrowUp />
        <ScrollTrack><ScrollThumb $h={860} /></ScrollTrack>
        <ArrowDown />
      </Scrollbar>
    </ConsoleWrap>
    <Taskbar>
      <Weather>
        <CloudSlot><CloudSun /></CloudSlot>
        <Badge>9+</Badge>
        <WeatherText>28°C<span>Mostly cloudy</span></WeatherText>
      </Weather>
      <StartLogo />
      <TaskSearch>
        <SearchGlyph c="#dfe3ea" s={20} />
        <PlainPlaceholder>Search</PlainPlaceholder>
        <TeaLeaf />
      </TaskSearch>
      <TaskIcons>
        <TaskIcon><TaskViewIcon /></TaskIcon>
        <TaskIcon><CopilotIcon /></TaskIcon>
        <TaskIcon><EdgeIcon /></TaskIcon>
        <TaskIcon><FolderIcon /></TaskIcon>
        <TaskIcon><StoreIcon /></TaskIcon>
        <TaskIcon><GreenAppIcon /></TaskIcon>
        <TaskIcon><OutlookIcon /></TaskIcon>
        <TaskIcon $active><ChromeIcon /></TaskIcon>
      </TaskIcons>
      <Tray>
        <CaretUpSmall />
        <LangBlock>ENG<br />US</LangBlock>
        <TrayIcons>
          <WifiIcon />
          <VolumeIcon />
          <BatteryIcon />
        </TrayIcons>
        <ClockBlock>03:11 PM<br />21-05-2025</ClockBlock>
      </Tray>
    </Taskbar>
  </Page>
)

export default App
